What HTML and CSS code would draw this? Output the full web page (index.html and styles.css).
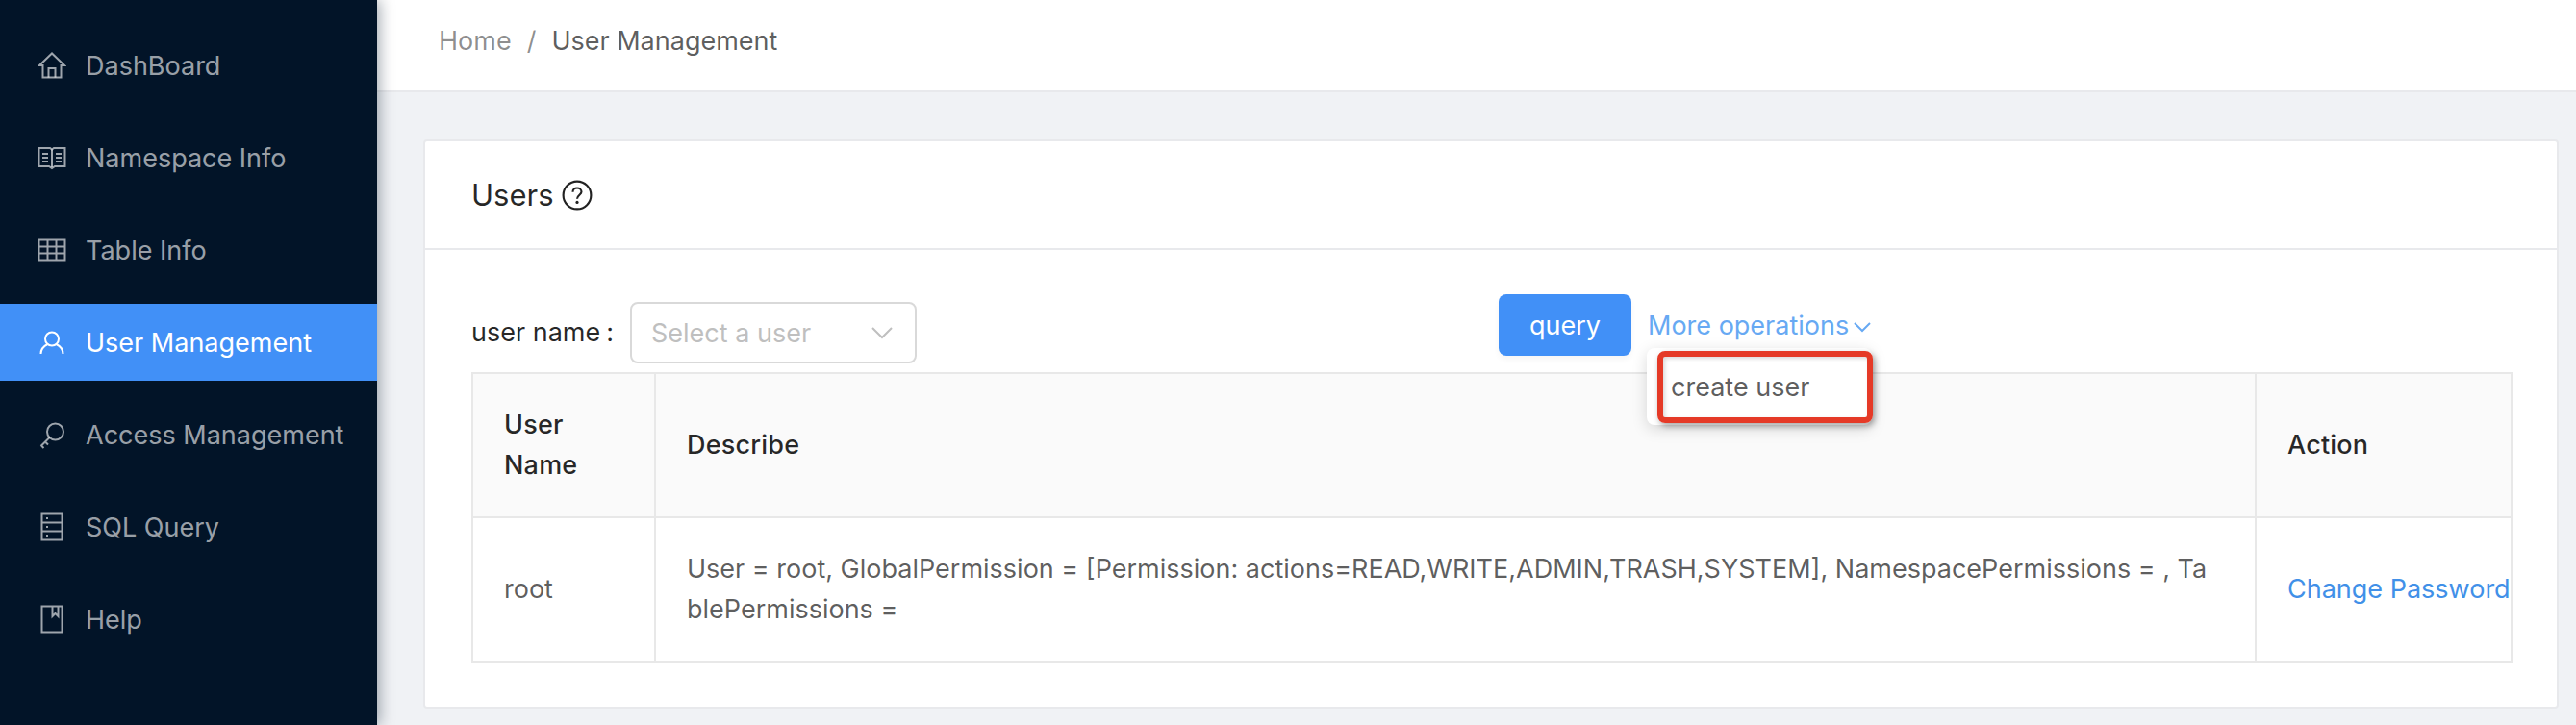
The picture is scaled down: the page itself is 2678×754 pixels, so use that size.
FILE: index.html
```html
<!DOCTYPE html>
<html lang="en">
<head>
<meta charset="utf-8">
<title>User Management</title>
<link rel="stylesheet" href="styles.css">
</head>
<body>
<div class="layout">
  <aside class="sider">
    <nav class="menu">
      <a class="menu-item">
        <svg class="menu-icon" viewBox="0 0 30 30"><path d="M2 15 15 2.500 28 15H24.500V27.500H5.500V15Z"/><path d="M11.500 27.500V18H18.500V27.500"/></svg>
        <span>DashBoard</span>
      </a>
      <a class="menu-item">
        <svg class="menu-icon" viewBox="0 0 30 30"><path d="M1.500 5H13L15 6.500 17 5H28.500V24H18L15 26 12 24H1.500Z"/><path d="M15 6.500V25M5 11H11M5 15H11M5 19H11M19 11H25M19 15H25M19 19H25"/></svg>
        <span>Namespace Info</span>
      </a>
      <a class="menu-item">
        <svg class="menu-icon" viewBox="0 0 30 30"><path d="M1.500 4.500H28.500V25.500H1.500ZM1.500 11.500H28.500M1.500 18.500H28.500M10.500 4.500V25.500M19.500 4.500V25.500"/></svg>
        <span>Table Info</span>
      </a>
      <a class="menu-item active">
        <svg class="menu-icon" viewBox="0 0 30 30"><circle cx="15" cy="11.500" r="7"/><path d="M3.500 27C3.500 22.500 6.500 19 10.500 17M26.500 27C26.500 22.500 23.500 19 19.500 17"/></svg>
        <span>User Management</span>
      </a>
      <a class="menu-item">
        <svg class="menu-icon" viewBox="0 0 30 30"><circle cx="18.500" cy="12" r="8.500"/><path d="M12.500 18 3.500 27M8 22.500 11 25.500M4 26.500 6.500 29"/></svg>
        <span>Access Management</span>
      </a>
      <a class="menu-item">
        <svg class="menu-icon" viewBox="0 0 30 30"><path d="M4.500 1.500H25.500V28.500H4.500ZM4.500 10.500H25.500M4.500 19.500H25.500M9 6H11M9 15H11M9 24H11"/></svg>
        <span>SQL Query</span>
      </a>
      <a class="menu-item">
        <svg class="menu-icon" viewBox="0 0 30 30"><path d="M4.500 1.500H25.500V28.500H4.500ZM15.500 1.500V12L18.500 9 21.500 12V1.500"/></svg>
        <span>Help</span>
      </a>
    </nav>
  </aside>
  <div class="main">
    <header class="topbar">
      <span class="crumb">Home</span>
      <span class="crumb-sep">/</span>
      <span class="crumb-current">User Management</span>
    </header>
    <main class="content">
      <section class="card">
        <div class="card-head">
          <span class="card-title">Users</span>
          <svg class="help-icon" viewBox="0 0 30 30"><circle cx="15" cy="15" r="13.500"/><path d="M10.800 12C10.800 9.500 12.700 8 15 8S19.200 9.600 19.200 11.800C19.200 14.600 15 15 15 18.500"/><circle class="dot" cx="15" cy="22" r="1.500"/></svg>
        </div>
        <div class="card-body">
          <div class="filters">
            <div class="filter-field">
              <label class="filter-label">user name<span class="colon">:</span></label>
              <div class="select">
                <span>Select a user</span>
                <svg class="select-arrow" viewBox="0 0 24 14"><path d="M2 2 12 12 22 2"/></svg>
              </div>
            </div>
            <div class="filter-actions">
              <button class="btn-primary">query</button>
              <a class="more-link">More operations<svg class="more-arrow" viewBox="0 0 20 12"><path d="M2 2 10 10 18 2"/></svg></a>
              <div class="dropdown">create user</div>
              <div class="annotation"></div>
            </div>
          </div>
          <table class="table">
            <colgroup>
              <col class="col-name"><col><col class="col-action">
            </colgroup>
            <thead>
              <tr><th>User Name</th><th>Describe</th><th>Action</th></tr>
            </thead>
            <tbody>
              <tr>
                <td>root</td>
                <td>User = root, GlobalPermission = [Permission: actions=READ,WRITE,ADMIN,TRASH,SYSTEM], NamespacePermissions = , TablePermissions =</td>
                <td><a class="action-link">Change Password</a></td>
              </tr>
            </tbody>
          </table>
        </div>
      </section>
    </main>
  </div>
</div>
</body>
</html>
```
FILE: styles.css
```css
* { box-sizing: border-box; }
html, body { margin: 0; height: 100%; }
body {
  font-family: Inter, "Liberation Sans", sans-serif;
  font-size: 27px;
  color: rgba(0, 0, 0, .65);
  background: #f0f2f5;
  overflow: hidden;
}
.layout { display: flex; height: 754px; }
.sider {
  flex: 0 0 392px;
  background: #021428;
  box-shadow: 3px 0 14px rgba(0, 21, 41, .35);
  position: relative;
  z-index: 2;
}
.menu { display: flex; flex-direction: column; gap: 16px; padding-top: 28px; }
.menu-item {
  display: flex;
  align-items: center;
  gap: 20px;
  height: 80px;
  padding-left: 39px;
  color: rgba(255, 255, 255, .62);
}
.menu-item.active { background: #4190f7; color: #fff; }
.menu-icon {
  flex: none;
  width: 30px;
  height: 30px;
  fill: none;
  stroke: currentColor;
  stroke-width: 2;
}
.main { flex: 1; min-width: 0; display: flex; flex-direction: column; }
.topbar {
  height: 96px;
  flex: none;
  display: flex;
  align-items: center;
  padding-left: 64px;
  padding-bottom: 10px;
  background: #fff;
  border-bottom: 2px solid #e8e9ec;
}
.crumb { color: rgba(0, 0, 0, .45); }
.crumb-sep { color: rgba(0, 0, 0, .45); margin: 0 16px; }
.crumb-current { color: rgba(0, 0, 0, .65); }
.content { flex: 1; padding: 49px 18px 0 48px; }
.card {
  height: 592px;
  background: #fff;
  border: 2px solid #e8e9ec;
  border-radius: 4px;
}
.card-head {
  height: 113px;
  display: flex;
  align-items: center;
  gap: 8px;
  padding-left: 48px;
  border-bottom: 2px solid #e8e9ec;
}
.card-title { font-size: 31px; color: rgba(0, 0, 0, .85); }
.help-icon { width: 32px; height: 32px; fill: none; stroke: #222; stroke-width: 2; }
.help-icon .dot { fill: #222; stroke: none; }
.card-body { padding: 46px 46px 0 48px; }
.filters { display: flex; height: 81px; }
.filter-field { flex: 0 0 1068px; display: flex; align-items: flex-start; padding-top: 8px; }
.filter-label {
  display: block;
  flex: 0 0 165px;
  line-height: 64px;
  color: rgba(0, 0, 0, .85);
}
.colon { margin-left: 6px; }
.select {
  width: 298px;
  height: 64px;
  display: flex;
  align-items: center;
  justify-content: space-between;
  padding: 0 22px 0 20px;
  border: 2px solid #d9d9d9;
  border-radius: 8px;
  color: #bfbfbf;
}
.select-arrow { width: 24px; height: 14px; fill: none; stroke: #bfbfbf; stroke-width: 2; }
.filter-actions { position: relative; display: flex; align-items: flex-start; gap: 17px; }
.btn-primary {
  width: 138px;
  height: 64px;
  padding: 0;
  border: 0;
  border-radius: 8px;
  background: #4190f7;
  color: #fff;
  font: inherit;
  box-shadow: 0 4px 6px rgba(0, 0, 0, .04);
}
.more-link {
  display: flex;
  align-items: center;
  gap: 4px;
  height: 64px;
  color: #67a9f3;
}
.more-arrow { width: 20px; height: 12px; margin-top: 4px; fill: none; stroke: #67a9f3; stroke-width: 2; }
.dropdown {
  position: absolute;
  left: 154px;
  top: 56px;
  width: 234px;
  height: 80px;
  padding: 19px 0 0 25px;
  line-height: 44px;
  background: #fff;
  border-radius: 8px;
  box-shadow: 0 4px 16px rgba(0, 0, 0, .15);
  z-index: 3;
}
.annotation {
  position: absolute;
  left: 165px;
  top: 59px;
  width: 224px;
  height: 75px;
  border: 6px solid #e53a27;
  border-radius: 8px;
  box-shadow: 2px 3px 6px rgba(0, 0, 0, .35), inset 2px 2px 4px rgba(0, 0, 0, .15);
  z-index: 4;
}
.table {
  width: 100%;
  table-layout: fixed;
  border-collapse: collapse;
  border: 2px solid #e8e8e8;
}
.col-name { width: 190px; }
.col-action { width: 266px; }
.table th, .table td {
  border: 2px solid #e8e8e8;
  padding: 0 0 0 32px;
  text-align: left;
  line-height: 42px;
  word-break: break-all;
  white-space: normal;
}
.table th {
  height: 150px;
  background: #fafafa;
  font-weight: 500;
  letter-spacing: .2px;
  color: rgba(0, 0, 0, .85);
}
.table td { height: 150px; padding-right: 40px; }
.table td:last-child { padding-right: 0; white-space: nowrap; }
.table th:first-child, .table td:first-child { padding-right: 32px; word-break: normal; }
.action-link { color: #4190e8; }
```
